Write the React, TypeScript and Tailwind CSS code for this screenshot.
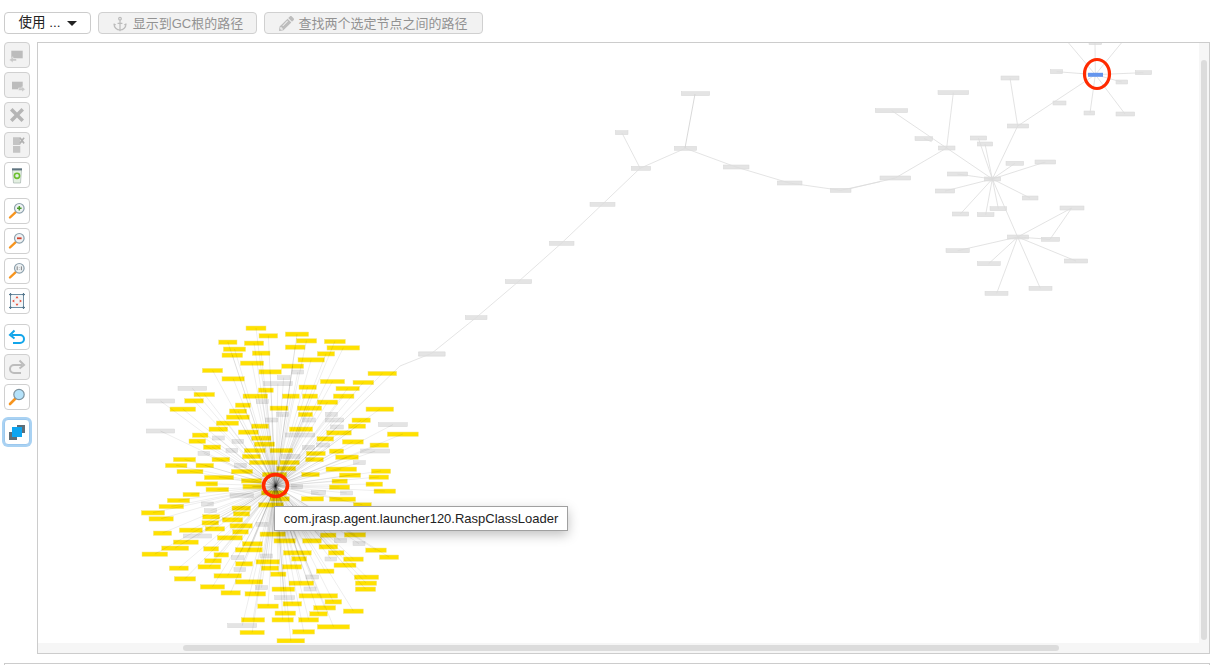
import { ReactNode } from "react";
import { Anchor } from "lucide-react";
import { FaPencilAlt } from "react-icons/fa";

type Bar = [number, number, number];

// cluster nodes, read from the 3x crops: [x1, x2, y]
const topYellow: Bar[] = [
    [348, 408, 24], [387, 443, 47], [466, 536, 42], [266, 321, 66], [343, 401, 69], [499, 560, 62], [583, 646, 64],
    [280, 347, 87], [466, 525, 81], [591, 689, 83], [276, 338, 105], [367, 420, 99], [562, 614, 101], [331, 401, 129],
    [504, 583, 119], [455, 521, 138], [217, 278, 151], [387, 454, 155], [714, 800, 160], [276, 343, 176], [571, 644, 184],
    [669, 731, 187], [192, 254, 223], [385, 430, 210], [507, 559, 201], [618, 688, 205], [164, 220, 242], [339, 413, 228],
    [457, 508, 228], [517, 563, 228], [610, 672, 228], [120, 197, 267], [316, 362, 255], [562, 623, 246], [420, 474, 264],
    [502, 575, 264], [708, 791, 267], [298, 350, 273], [505, 548, 283], [289, 358, 291], [666, 721, 300], [259, 326, 309],
    [365, 416, 318], [655, 707, 318], [237, 293, 327], [325, 385, 336], [478, 548, 327], [590, 664, 338], [772, 865, 342],
    [187, 234, 345], [365, 423, 354], [561, 611, 356], [177, 227, 363], [373, 434, 372], [637, 700, 365], [720, 776, 375],
    [220, 272, 381], [343, 406, 391], [420, 488, 391], [598, 641, 393], [529, 586, 400], [337, 391, 409], [617, 685, 411],
    [246, 299, 418], [130, 197, 418], [358, 442, 427], [450, 508, 427], [527, 580, 418], [106, 171, 436], [198, 251, 436],
    [440, 497, 445], [588, 680, 447], [141, 219, 454], [304, 368, 454], [724, 782, 453], [515, 568, 463], [628, 692, 465],
    [397, 470, 463], [223, 311, 472], [717, 776, 471], [334, 395, 482], [606, 652, 483], [198, 263, 491], [708, 758, 492],
    [339, 395, 500], [598, 659, 501], [228, 296, 508],
];
const topGray: Bar[] = [
    [486, 521, 156], [442, 480, 173], [400, 487, 191], [144, 230, 205], [49, 134, 243], [379, 415, 245], [440, 476, 283],
    [586, 622, 283], [407, 443, 300], [518, 556, 300], [586, 641, 300], [602, 640, 321], [745, 832, 314], [49, 134, 333],
    [466, 554, 345], [247, 283, 354], [306, 341, 364], [560, 598, 375], [517, 553, 382], [288, 323, 391], [204, 239, 400],
    [692, 779, 393], [455, 510, 409], [670, 706, 428], [313, 349, 436],
];
const bottomYellow: Bar[] = [
    [339, 395, 19], [159, 208, 43], [112, 179, 61], [87, 161, 79], [306, 362, 84], [34, 104, 98], [57, 130, 116],
    [218, 269, 110], [310, 359, 101], [386, 460, 74], [216, 266, 128], [277, 338, 119], [300, 367, 137], [226, 284, 146],
    [148, 217, 150], [70, 125, 159], [308, 355, 155], [130, 205, 186], [262, 337, 173], [95, 176, 204], [221, 266, 206],
    [337, 397, 191], [36, 113, 222], [316, 397, 209], [252, 296, 224], [224, 274, 242], [317, 368, 251], [378, 448, 245],
    [204, 272, 260], [118, 175, 264], [394, 446, 264], [457, 515, 260], [133, 197, 296], [252, 334, 287], [422, 468, 282],
    [316, 398, 305], [211, 284, 320], [477, 551, 309], [273, 331, 338], [345, 407, 341], [426, 494, 327], [507, 623, 347],
    [383, 445, 378], [459, 515, 371], [585, 635, 365], [551, 617, 383], [640, 700, 393], [435, 497, 399], [539, 592, 401],
    [334, 404, 419], [426, 490, 419], [506, 566, 419], [562, 659, 440], [330, 403, 457], [488, 554, 455], [441, 524, 482],
    [390, 466, 162], [432, 496, 182], [460, 544, 218], [485, 530, 236], [518, 574, 182], [567, 623, 200], [595, 642, 218],
    [641, 700, 237], [612, 678, 255], [559, 612, 273], [673, 746, 291], [676, 740, 309], [676, 737, 327], [707, 769, 210],
    [748, 806, 231], [571, 618, 165], [643, 707, 164], [732, 797, 33], [514, 581, 56], [598, 677, 57], [670, 724, 74],
    [394, 470, 38], [420, 478, 56],
];
const bottomGray: Bar[] = [
    [300, 370, 46], [214, 250, 72], [223, 260, 92], [378, 414, 133], [160, 245, 168], [304, 342, 233], [390, 427, 228],
    [312, 347, 269], [585, 620, 237], [528, 566, 291], [613, 650, 182], [669, 705, 191], [376, 413, 323], [522, 558, 327],
    [434, 494, 353], [293, 380, 437], [485, 518, 20], [544, 587, 38], [632, 668, 39],
];
const chainBars: Bar[] = [
    [844, 929, 41], [823, 890, 205], [646, 684, 158], [694, 752, 265], [570, 645, 373], [448, 522, 490], [316, 395, 605],
    [196, 261, 713], [56, 135, 822], [970, 1047, 261], [1132, 1206, 309], [1291, 1353, 331],
];
const rightBars: Bar[] = [
    [687, 725, 8], [571, 608, 95], [826, 875, 98], [768, 803, 126], [579, 618, 189], [423, 477, 114], [672, 704, 219],
    [768, 824, 222], [442, 506, 258], [234, 326, 158], [46, 143, 212], [165, 218, 296], [235, 285, 324], [60, 152, 414],
    [331, 380, 294], [352, 398, 312], [438, 491, 370], [525, 587, 366], [262, 323, 402], [373, 422, 417], [226, 284, 453],
    [487, 534, 474], [277, 326, 522], [352, 402, 524], [390, 440, 506], [600, 672, 504], [442, 506, 591], [544, 599, 598],
    [258, 328, 632], [352, 421, 671], [613, 683, 663], [375, 444, 760], [507, 576, 745],
];

const chainLine = "0,858 95,820 228,713 355,605 484,490 607,373 720,265 856,205 1008,261 1168,309 1322,331 1440,305";
const rightLines: number[][] = [
    [706, 104, 705, 8], [706, 104, 625, 8], [706, 104, 785, 8], [706, 104, 590, 95], [706, 104, 850, 98], [706, 104, 785, 126],
    [706, 104, 690, 219], [706, 104, 795, 222], [706, 104, 473, 258], [473, 258, 450, 114], [473, 258, 397, 417],
    [397, 417, 355, 294], [397, 417, 375, 312], [397, 417, 465, 370], [397, 417, 556, 366], [397, 417, 292, 402],
    [397, 417, 255, 453], [397, 417, 510, 474], [397, 417, 301, 522], [397, 417, 377, 524], [397, 417, 415, 506],
    [397, 417, 473, 591], [397, 417, 95, 212], [192, 296, 215, 305], [260, 324, 280, 158], [260, 324, 106, 414],
    [106, 414, -30, 446], [473, 591, 635, 504], [473, 591, 570, 598], [473, 591, 293, 632], [473, 591, 386, 671],
    [473, 591, 648, 663], [473, 591, 410, 760], [473, 591, 541, 745], [635, 504, 570, 598],
];

const fromTop = (b: Bar): Bar => [130 + b[0] / 3, 130 + b[1] / 3, 320 + b[2] / 3];
const fromBottom = (b: Bar): Bar => [130 + b[0] / 3, 130 + b[1] / 3, 480 + b[2] / 3];
const fromChain = (b: Bar): Bar => [400 + b[0] / 3, 400 + b[1] / 3, 80 + b[2] / 3];
const fromRight = (b: Bar): Bar => [860 + b[0] / 3, 860 + b[1] / 3, 40 + b[2] / 3];

const yellow = [...topYellow.map(fromTop), ...bottomYellow.map(fromBottom)];
const gray = [...topGray.map(fromTop), ...bottomGray.map(fromBottom)];
const pale = [...chainBars.map(fromChain), ...rightBars.map(fromRight), [419, 445, 354] as Bar];

const GraphCanvas = () => (
    <svg viewBox="38 43 1171 610" className="block w-full h-full blur-[0.35px]">
        {pale.map((b, i) => (
            <rect key={i} x={b[0]} y={b[2] - 2} width={b[1] - b[0]} height={4} fill="#e4e4e4" stroke="#d8d8d8" strokeWidth={0.5} />
        ))}
        {gray.map((b, i) => (
            <rect key={i} x={b[0]} y={b[2] - 2} width={b[1] - b[0]} height={4} fill="#e4e4e4" stroke="#d8d8d8" strokeWidth={0.5} />
        ))}
        {yellow.map((b, i) => (
            <rect key={i} x={b[0]} y={b[2] - 2} width={b[1] - b[0]} height={4.4} fill="#ffe100" stroke="#f3e88c" strokeWidth={0.5} />
        ))}
        {[...yellow, ...gray].map((b, i) => (
            <line key={i} x1={275.5} y1={486} x2={(b[0] + b[1]) / 2} y2={b[2]} stroke="#000" strokeOpacity={0.13} strokeWidth={0.55} />
        ))}
        <polyline
            points={chainLine.split(" ").map((p) => {
                const [x, y] = p.split(",").map(Number);
                return `${400 + x / 3},${80 + y / 3}`;
            }).join(" ")}
            fill="none"
            stroke="#ddd"
            strokeWidth={0.8}
        />
        <line x1={400} y1={366} x2={275.5} y2={486} stroke="#000" strokeOpacity={0.14} strokeWidth={0.7} />
        <line x1={695} y1={94} x2={685} y2={148} stroke="#d4d4d4" strokeWidth={0.9} />
        <line x1={622} y1={133} x2={640} y2={168} stroke="#ddd" strokeWidth={0.8} />
        {rightLines.map((l, i) => (
            <line key={i} x1={860 + l[0] / 3} y1={40 + l[1] / 3} x2={860 + l[2] / 3} y2={40 + l[3] / 3} stroke="#dcdcdc" strokeWidth={0.8} />
        ))}
        <rect x={1088} y={72.8} width={15} height={4} fill="#6495ed" />
        <ellipse cx={1097} cy={74} rx={12.5} ry={14.5} fill="none" stroke="#ff2a00" strokeWidth={3.2} />
        <ellipse cx={275.5} cy={485.5} rx={12} ry={11} fill="none" stroke="#ff2a00" strokeWidth={3.6} />
    </svg>
);

const ToolButton = ({ children, disabled, active, className }: { children: ReactNode; disabled?: boolean; active?: boolean; className?: string }) => (
    <button
        className={`w-[26px] h-[26px] flex items-center justify-center rounded-[4px] border p-0 ${
            active ? "border-[#9cc8ee] ring-[2px] ring-[#a9d2f3]" : "border-[#d0d0d0]"
        } ${disabled ? "bg-[#f2f2f2]" : "bg-white"} ${className ?? ""}`}
    >
        <svg width="20" height="20" viewBox="0 0 20 20">{children}</svg>
    </button>
);

const Magnifier = ({ children }: { children?: ReactNode }) => (
    <>
        <path d="M3 16.5 L9 10.8" stroke="#f7941d" strokeWidth="2.4" strokeLinecap="round" />
        <circle cx="12.3" cy="7.3" r="4.8" fill="#eef2f4" stroke="#8ca0ac" strokeWidth="1.2" />
        {children}
    </>
);

const SelectButton = () => (
    <button className="w-[87px] h-[22px] flex items-center justify-center gap-[6px] pt-[1px] bg-white border border-[#ccc] rounded-[4px] text-[13.5px] text-[#222]">
        使用 ...
        <svg width="10" height="5" viewBox="0 0 10 5"><path d="M0 0 H10 L5 5 Z" fill="#222" /></svg>
    </button>
);

export default function App() {
    return (
        <div
            className="w-[1216px] h-[665px] overflow-hidden bg-white pt-3 pl-1 pr-[6px]"
            style={{ fontFamily: '"Liberation Sans", "Noto Sans CJK SC", sans-serif' }}
        >
            {/* Control Top */}
            <div className="flex gap-[7px] h-[22px]">
                <SelectButton />
                <button className="w-[159px] flex items-center justify-center gap-[5px] pt-[1px] bg-[#f2f2f2] border border-[#d0d0d0] rounded-[4px] text-[13px] text-[#929292]">
                    <Anchor size={16} strokeWidth={1.8} className="text-[#bbb]" />
                    显示到GC根的路径
                </button>
                <button className="w-[219px] flex items-center justify-center gap-[4px] pt-[1px] bg-[#f2f2f2] border border-[#d0d0d0] rounded-[4px] text-[13px] text-[#929292]">
                    <FaPencilAlt size={15} className="text-[#bdbdbd]" />
                    查找两个选定节点之间的路径
                </button>
            </div>

            <div className="flex gap-[7px] mt-2">
                {/* Side tools */}
                <div className="w-[26px] flex flex-col shrink-0">
                    <div className="flex flex-col gap-1">
                        <ToolButton disabled>
                            <path d="M4.3 5.7 H15.7 V13.3 H4.3 Z" fill="#bcbcbc" />
                            <path d="M2.3 15 L6 11.7 V13.5 H9.5 V16 H6 V17.7 Z" fill="#c8c8c8" stroke="#f2f2f2" strokeWidth="0.5" />
                        </ToolButton>
                        <ToolButton disabled>
                            <path d="M5 6.7 H15.7 V14.3 H5 Z" fill="#bcbcbc" />
                            <path d="M18.3 14.2 L15 11.5 V13 H11.5 V15.5 H15 V17 Z" fill="#c8c8c8" stroke="#f2f2f2" strokeWidth="0.5" />
                        </ToolButton>
                        <ToolButton disabled>
                            <path d="M3 5.5 L5.5 3 L10 7.5 L14.5 3 L17 5.5 L12.5 10 L17 14.5 L14.5 17 L10 12.5 L5.5 17 L3 14.5 L7.5 10 Z" fill="#b5b5b5" />
                        </ToolButton>
                        <ToolButton disabled>
                            <path d="M6 2.3 H13.3 V10 H6 Z M6 11 H13.3 V17.7 H6 Z" fill="#c4c4c4" />
                            <path d="M12.3 3.3 L13.3 2.3 L15 4 L16.7 2.3 L17.7 3.3 L16 5.5 L17.7 7.7 L16.7 9 L15 7.2 L13.3 9 L12.3 7.7 L14 5.5 Z" fill="#b0b0b0" />
                        </ToolButton>
                        <ToolButton>
                            <path d="M5.5 5 H14.5 L13.5 18 H6.5 Z" fill="#e4f0e2" stroke="#a5b4ae" strokeWidth="0.7" />
                            <path d="M5 3.3 H15 V5.3 H5 Z" fill="#5f7480" />
                            <circle cx="10" cy="10.8" r="2.6" fill="none" stroke="#6cbf2e" strokeWidth="1.6" />
                        </ToolButton>
                    </div>
                    <div className="flex flex-col gap-1 mt-[10px]">
                        <ToolButton>
                            <Magnifier><path d="M10 7.3 H14.6 M12.3 5 V9.6" stroke="#4a9a2a" strokeWidth="1.5" /></Magnifier>
                        </ToolButton>
                        <ToolButton>
                            <Magnifier><path d="M10 7.3 H14.6" stroke="#d2402a" strokeWidth="1.8" /></Magnifier>
                        </ToolButton>
                        <ToolButton>
                            <Magnifier><path d="M10.2 5.4 V9.2 M12.3 6.2 V6.6 M12.3 8 V8.4 M14.4 5.4 V9.2" stroke="#666" strokeWidth="0.8" /></Magnifier>
                        </ToolButton>
                        <ToolButton>
                            <path d="M3.5 3.5 H16.5 V16.5 H3.5 Z" fill="#f3f6f8" stroke="#6f8ea3" strokeWidth="1" />
                            <path d="M2 3.5 H5 M15 3.5 H18 M2 16.5 H5 M15 16.5 H18 M3.5 2 V5 M16.5 2 V5 M3.5 15 V18 M16.5 15 V18" stroke="#56788e" strokeWidth="1.2" />
                            <path d="M10 5 L8.5 7.3 H11.5 Z M10 15 L8.5 12.7 H11.5 Z M5 10 L7.3 8.5 V11.5 Z M15 10 L12.7 8.5 V11.5 Z" fill="#e9503a" />
                        </ToolButton>
                    </div>
                    <div className="flex flex-col gap-1 mt-[10px]">
                        <ToolButton>
                            <path d="M5 8 H13 A4 4 0 0 1 13 16 H6" fill="none" stroke="#12a5ea" strokeWidth="2" />
                            <path d="M7.5 3.5 L3 8 L7.5 11.5" fill="none" stroke="#12a5ea" strokeWidth="2" />
                        </ToolButton>
                        <ToolButton disabled>
                            <path d="M15 8 H7 A4 4 0 0 0 7 16 H14" fill="none" stroke="#bcbcbc" strokeWidth="2" />
                            <path d="M12.5 3.5 L17 8 L12.5 11.5" fill="none" stroke="#bcbcbc" strokeWidth="2" />
                        </ToolButton>
                        <ToolButton>
                            <path d="M3 17 L9 11" stroke="#f7941d" strokeWidth="2.6" strokeLinecap="round" />
                            <circle cx="12" cy="7.5" r="5.2" fill="#b5e2fa" stroke="#7d929e" strokeWidth="1.2" />
                        </ToolButton>
                        <ToolButton active className="mt-[5px]">
                            <path d="M10 3 H18 V11 H10 Z" fill="#5e6e78" />
                            <path d="M2 10 H10 V18 H2 Z" fill="#5e6e78" />
                            <path d="M5 5 H15 V15 H5 Z" fill="#0ea5f0" />
                        </ToolButton>
                    </div>
                </div>

                {/* Canvas */}
                <div className="relative w-[1173px] h-[612px] border border-[#ccc] overflow-hidden">
                    <GraphCanvas />
                    <div className="absolute right-0 top-0 bottom-0 w-[10px] bg-[#f6f6f6]">
                        <div className="mx-auto mt-[17px] w-[6px] h-[580px] rounded-full bg-[#dcdcdc]" />
                    </div>
                    <div className="absolute left-0 right-0 bottom-0 h-[10px] bg-[#f6f6f6]">
                        <div className="ml-[145px] mt-[2px] w-[876px] h-[6px] rounded-full bg-[#dcdcdc]" />
                    </div>
                    <div className="absolute left-[236px] top-[463px] w-[294px] h-[25px] flex items-center justify-center bg-white border border-[#a0a0a0] text-[13px] text-[#222] shadow-[0_4px_12px_rgba(0,0,0,0.25)] whitespace-nowrap">
                        com.jrasp.agent.launcher120.RaspClassLoader
                    </div>
                </div>
            </div>

            {/* Next panel edge */}
            <div className="mt-[9px] h-4 border border-[#ccc]" />
        </div>
    );
}
